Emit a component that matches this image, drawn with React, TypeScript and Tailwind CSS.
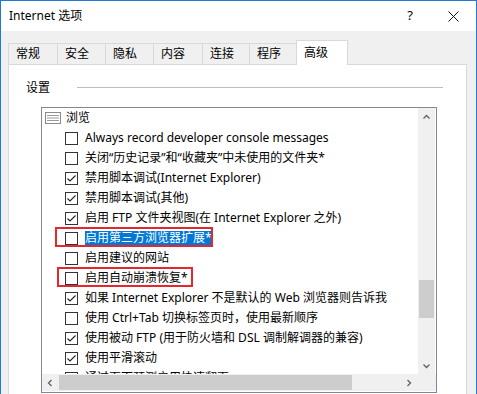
import React from "react";

const TABS = [
  { label: "常规", w: "w-[49px]" },
  { label: "安全", w: "w-[48px]" },
  { label: "隐私", w: "w-[48px]" },
  { label: "内容", w: "w-[49px]" },
  { label: "连接", w: "w-[47px]" },
  { label: "程序", w: "w-[47px]" },
];

type Row = { text: string; checked: boolean; selected?: boolean; boxed?: string };

const ROWS: Row[] = [
  { text: "Always record developer console messages", checked: false },
  { text: "关闭“历史记录”和“收藏夹”中未使用的文件夹*", checked: false },
  { text: "禁用脚本调试(Internet Explorer)", checked: true },
  { text: "禁用脚本调试(其他)", checked: true },
  { text: "启用 FTP 文件夹视图(在 Internet Explorer 之外)", checked: true },
  { text: "启用第三方浏览器扩展*", checked: false, selected: true, boxed: "left-[13px] w-[158px]" },
  { text: "启用建议的网站", checked: false },
  { text: "启用自动崩溃恢复*", checked: false, boxed: "left-[15px] w-[136px]" },
  { text: "如果 Internet Explorer 不是默认的 Web 浏览器则告诉我", checked: true },
  { text: "使用 Ctrl+Tab 切换标签页时，使用最新顺序", checked: false },
  { text: "使用被动 FTP (用于防火墙和 DSL 调制解调器的兼容)", checked: true },
  { text: "使用平滑滚动", checked: true },
  { text: "通过页面预测启用快速翻页", checked: false },
];

function CheckBox({ checked }: { checked: boolean }) {
  return (
    <svg width="13" height="13" viewBox="0 0 13 13" className="flex-shrink-0">
      <rect x="0.5" y="0.5" width="12" height="12" fill="#fff" stroke="#333" />
      {checked && <polyline points="2.5,6.5 5,9 10.5,3.5" fill="none" stroke="#222" strokeWidth="1.1" />}
    </svg>
  );
}

function Arrow({ dir }: { dir: "up" | "down" | "left" | "right" }) {
  const pts = {
    up: "1.5,5.5 4.5,2.5 7.5,5.5",
    down: "1.5,2.5 4.5,5.5 7.5,2.5",
    left: "5.5,1 2.5,4 5.5,7",
    right: "2.5,1 5.5,4 2.5,7",
  }[dir];
  return (
    <svg width="9" height="8" viewBox="0 0 9 8">
      <polyline points={pts} fill="none" stroke="#606060" strokeWidth="1.3" />
    </svg>
  );
}

export default function App() {
  return (
    <div className="w-[477px] h-[394px] overflow-hidden bg-[#f0f0f0] border-t border-l border-r border-[#1c7cd5] font-['Noto_Sans','Noto_Sans_CJK_SC',sans-serif] text-[12px] text-black">
      {/* title bar */}
      <div className="h-[30px] bg-white flex items-center justify-between pl-[8px] pr-[17px]">
        <span>Internet 选项</span>
        <div className="flex items-center gap-[35px]">
          <span className="text-[13px]">?</span>
          <svg width="11" height="11" viewBox="0 0 11 11">
            <path d="M0.5 0.5 L10.5 10.5 M10.5 0.5 L0.5 10.5" stroke="#111" strokeWidth="1" />
          </svg>
        </div>
      </div>

      {/* tabs */}
      <div className="mt-[9px] h-[24px] flex items-end pl-[7px]">
        {TABS.map(t => (
          <div key={t.label} className={`${t.w} h-[21px] border-t border-l border-[#d9d9d9] pl-[7px] leading-[20px]`}>
            {t.label}
          </div>
        ))}
        <div className="relative z-10 w-[52px] h-[25px] mb-[-1px] bg-white border-t border-l border-r border-[#d9d9d9] pl-[7px] leading-[23px]">
          高级
        </div>
      </div>

      {/* panel */}
      <div className="ml-[7px] w-[459px] h-[400px] bg-white border border-[#d9d9d9]">
        <div className="mt-[15px] h-[16px] flex items-center pl-[17px]">
          <span className="leading-[16px]">设置</span>
          <div className="ml-[27px] w-[366px] h-px bg-[#bcbcbc] mt-[-2px]" />
        </div>

        <div className="mt-[11px] ml-[32px] w-[396px] h-[286px] border border-[#828790] flex flex-col">
          <div className="flex h-[266px]">
            <div className="w-[376px] overflow-hidden">
              <div className="h-[20px] flex items-center pl-[3px]">
                <svg width="16" height="12" viewBox="0 0 16 12" className="flex-shrink-0">
                  <rect x="0.5" y="0.5" width="15" height="11" fill="#fff" stroke="#8a8a8a" />
                  <path d="M2 3.5 H14 M2 6 H14 M2 8.5 H14" stroke="#9a9a9a" />
                </svg>
                <span className="ml-[5px]">浏览</span>
              </div>
              {ROWS.map(r => (
                <div key={r.text} className="relative h-[20px] flex items-center pl-[23px] whitespace-nowrap">
                  <CheckBox checked={r.checked} />
                  <span className={`ml-[7px] leading-[14px] ${r.selected ? "bg-[#0078d7] text-white" : ""}`}>{r.text}</span>
                  {r.boxed && <div className={`absolute top-[-1px] h-[20px] border-2 border-[#e5262b] ${r.boxed}`} />}
                </div>
              ))}
            </div>
            <div className="w-[17px] bg-[#f0f0f0] flex flex-col">
              <div className="h-[17px] flex items-center justify-center"><Arrow dir="up" /></div>
              <div className="h-[155px]" />
              <div className="h-[38px] mx-px bg-[#cdcdcd]" />
              <div className="flex-1" />
              <div className="h-[17px] flex items-center justify-center"><Arrow dir="down" /></div>
            </div>
          </div>
          <div className="flex h-[17px] bg-[#f0f0f0]">
            <div className="w-[17px] flex items-center justify-center"><Arrow dir="left" /></div>
            <div className="w-[293px] my-px bg-[#cdcdcd]" />
            <div className="w-[49px]" />
            <div className="w-[17px] flex items-center justify-center"><Arrow dir="right" /></div>
            <div className="w-[17px]" />
          </div>
        </div>
      </div>
    </div>
  );
}
